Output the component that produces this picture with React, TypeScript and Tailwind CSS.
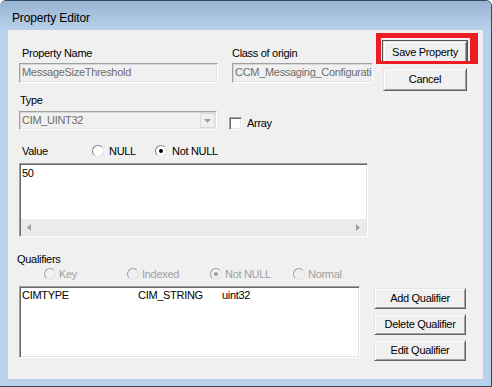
import type { ReactNode } from "react";

const sunken =
  "border border-t-[#a0a0a0] border-l-[#a0a0a0] border-b-white border-r-white shadow-[inset_1px_1px_0_#696969,inset_-1px_-1px_0_#e3e3e3]";
const sunkenLight =
  "border border-t-[#a0a0a0] border-l-[#a0a0a0] border-b-white border-r-white shadow-[inset_1px_1px_0_#d8d8d8,inset_-1px_-1px_0_#e3e3e3]";

function Btn({ children, className = "" }: { children: ReactNode; className?: string }) {
  return (
    <div
      className={`flex items-center justify-center bg-[#f0f0f0] border border-t-[#e3e3e3] border-l-[#e3e3e3] border-b-[#646464] border-r-[#646464] shadow-[inset_1px_1px_0_#ffffff,inset_-1px_-1px_0_#a0a0a0] ${className}`}
    >
      {children}
    </div>
  );
}

function Radio({ checked = false, disabled = false }: { checked?: boolean; disabled?: boolean }) {
  return (
    <span
      className={`flex h-[12px] w-[12px] shrink-0 items-center justify-center rounded-full border ${
        disabled
          ? "border-t-[#a0a0a0] border-l-[#a0a0a0] border-b-[#e3e3e3] border-r-[#e3e3e3] bg-[#f0f0f0]"
          : "border-t-[#808080] border-l-[#808080] border-b-[#e3e3e3] border-r-[#e3e3e3] bg-white"
      }`}
    >
      {checked && (
        <span className={`h-[4px] w-[4px] rounded-full ${disabled ? "bg-[#a0a0a0]" : "bg-black"}`} />
      )}
    </span>
  );
}

function Arrow({ dir }: { dir: "left" | "right" }) {
  return (
    <svg width="4" height="7" viewBox="0 0 4 7">
      <path d={dir === "left" ? "M4 0 L0 3.5 L4 7 Z" : "M0 0 L4 3.5 L0 7 Z"} fill="#a0a0a0" />
    </svg>
  );
}

export default function App() {
  return (
    <div className="relative h-[387px] w-[492px] overflow-hidden rounded-t-[6px] border-t border-r border-b border-[#34495e] bg-[#b9d1ea] font-['Liberation_Sans',Arial,sans-serif]">
      <div className="h-[29px] bg-linear-to-b from-[#98b4d3] to-[#b9d1ea] pl-[12px] pt-[10px]">
        <span className="block text-[12px] leading-[14px] tracking-[-0.15px] text-black">Property Editor</span>
      </div>

      <div className="relative ml-[8px] h-[349px] w-[475px] bg-[#f0f0f0] text-[11px] leading-[13px] tracking-[-0.3px] text-black">
        <div className="flex items-start">
          <div className="w-[365px] pl-[11px]">
            <div className="flex pt-[17px]">
              <div className="w-[199px]">
                <div className="pl-[3px]">Property Name</div>
                <div className={`mt-[3px] h-[20px] w-[199px] overflow-hidden whitespace-nowrap bg-[#f0f0f0] pl-[2px] pt-[2px] text-[#6d6d6d] ${sunkenLight}`}>
                  MessageSizeThreshold
                </div>
              </div>
              <div className="ml-[14px] w-[141px]">
                <div>Class of origin</div>
                <div className={`mt-[3px] h-[20px] w-[141px] overflow-hidden whitespace-nowrap bg-[#f0f0f0] pl-[2px] pt-[2px] text-[#6d6d6d] ${sunkenLight}`}>
                  CCM_Messaging_Configuration
                </div>
              </div>
            </div>

            <div className="mt-[11px] pl-[1px]">Type</div>
            <div className="mt-[4px] flex items-start">
              <div className={`flex h-[19px] w-[198px] items-center justify-between bg-[#f0f0f0] pl-[2px] pr-[1px] text-[#6d6d6d] ${sunkenLight}`}>
                <span>CIM_UINT32</span>
                <span className="flex h-[15px] w-[15px] items-center justify-center border border-[#d9d9d9] bg-[#f0f0f0]">
                  <svg width="7" height="4" viewBox="0 0 7 4">
                    <path d="M0 0 L7 0 L3.5 4 Z" fill="#a0a0a0" />
                  </svg>
                </span>
              </div>
              <div className="ml-[12px] mt-[6px] flex items-center">
                <span className={`h-[13px] w-[13px] bg-white ${sunken}`} />
                <span className="ml-[5px]">Array</span>
              </div>
            </div>

            <div className="mt-[13px] flex h-[16px] items-center">
              <span className="w-[73px] pl-[3px]">Value</span>
              <span className="flex w-[63px] items-center">
                <Radio />
                <span className="ml-[5px]">NULL</span>
              </span>
              <span className="flex items-center">
                <Radio checked />
                <span className="ml-[5px]">Not NULL</span>
              </span>
            </div>

            <div className={`mt-[4px] flex h-[74px] w-[349px] flex-col bg-white ${sunken}`}>
              <div className="flex-1 pl-[2px] pt-[3px]">50</div>
              <div className="mx-[1px] mb-[1px] flex h-[16px] items-center justify-between bg-[#ebebeb] px-[6px]">
                <Arrow dir="left" />
                <Arrow dir="right" />
              </div>
            </div>
          </div>

          <div className="ml-[10px] mt-[11px] flex w-[84px] flex-col">
            <Btn className="h-[22px] w-[84px] outline outline-1 outline-[#505050]">Save Property</Btn>
            <Btn className="mt-[5px] h-[23px] w-[84px]">Cancel</Btn>
          </div>
        </div>

        <div className="mt-[16px] pl-[9px]">Qualifiers</div>
        <div className="flex h-[16px] items-center pl-[36px] text-[#a0a0a0]">
          <span className="flex w-[83px] items-center">
            <Radio disabled />
            <span className="ml-[3px]">Key</span>
          </span>
          <span className="flex w-[83px] items-center">
            <Radio disabled />
            <span className="ml-[3px]">Indexed</span>
          </span>
          <span className="flex w-[83px] items-center">
            <Radio disabled checked />
            <span className="ml-[3px]">Not NULL</span>
          </span>
          <span className="flex w-[83px] items-center">
            <Radio disabled />
            <span className="ml-[3px]">Normal</span>
          </span>
        </div>

        <div className="mt-[4px] flex items-start">
          <div className={`ml-[11px] h-[72px] w-[341px] bg-white pl-[2px] pt-[2px] ${sunken}`}>
            <div className="flex">
              <span className="w-[116px]">CIMTYPE</span>
              <span className="w-[84px]">CIM_STRING</span>
              <span>uint32</span>
            </div>
          </div>
          <div className="ml-[14px] mt-[2px] flex flex-col gap-[5px]">
            <Btn className="h-[21px] w-[92px]">Add Qualifier</Btn>
            <Btn className="h-[21px] w-[92px]">Delete Qualifier</Btn>
            <Btn className="h-[21px] w-[92px]">Edit Qualifier</Btn>
          </div>
        </div>

        <div className="absolute left-[368px] top-[3px] h-[31px] w-[102px] border-[5px] border-r-[8px] border-b-[3px] border-[#ec1c24]" />
      </div>
    </div>
  );
}
